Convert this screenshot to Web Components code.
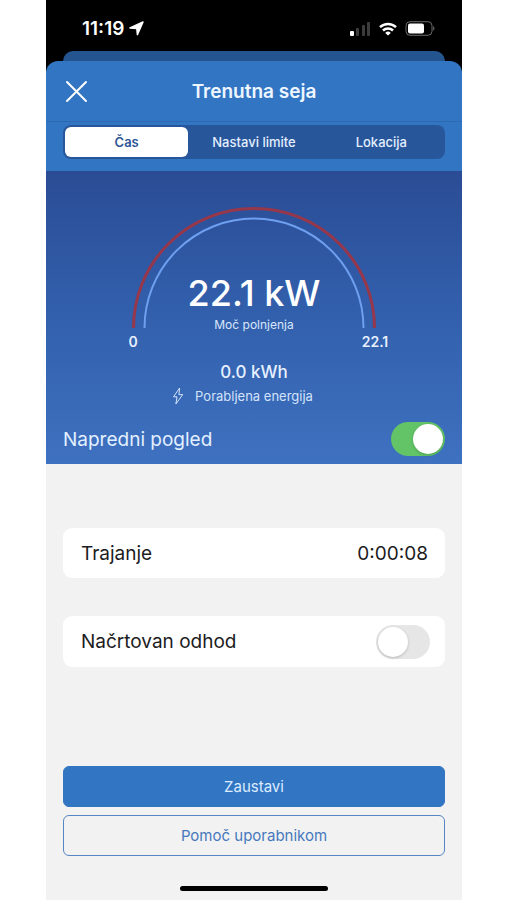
<!DOCTYPE html>
<html lang="sl">
<head>
<meta charset="utf-8">
<meta name="viewport" content="width=device-width, initial-scale=1">
<title>Trenutna seja</title>
<style>
body{
    margin: 0;
    background-color: #fff;
    font-family: Inter, "Liberation Sans", sans-serif;
}
</style>
</head>
<body>
<charge-screen>
    <status-bar slot="status" data-time="11:19"></status-bar>
    <sheet-header slot="header">Trenutna seja</sheet-header>
    <segment-tabs slot="header" data-items="Čas,Nastavi limite,Lokacija"></segment-tabs>
    <power-gauge slot="panel" data-min="0" data-max="22.1" data-value="22.1 kW" data-label="Moč polnjenja"></power-gauge>
    <energy-total slot="panel" data-value="0.0 kWh">Porabljena energija</energy-total>
    <toggle-row slot="panel" class="plain" data-label="Napredni pogled" data-on></toggle-row>
    <info-row data-label="Trajanje">0:00:08</info-row>
    <toggle-row class="card" data-label="Načrtovan odhod"></toggle-row>
    <action-button slot="actions" class="primary">Zaustavi</action-button>
    <action-button slot="actions" class="outline">Pomoč uporabnikom</action-button>
</charge-screen>

<script>
function makeTemplate(html){
    const template=document.createElement("template");
    template.innerHTML=html;
    return template;
}

const screenTemplate=makeTemplate(`
<style>
*{
    box-sizing: border-box;
}
:host{
    display: block;
    padding: 0 45px 0 46px;
}
.phone{
    display: flex;
    flex-direction: column;
    min-height: 100vh;
    background-color: #f2f2f3;
}
.top{
    background-color: #000;
}
/* edge of the page lying under the sheet */
.behind{
    height: 10px;
    margin: 0 17px;
    border-radius: 10px 10px 0 0;
    background-color: #24558f;
}
header{
    border-radius: 12px 12px 0 0;
    background-color: #3275c3;
    padding-bottom: 12px;
}
.panel{
    display: flex;
    flex-direction: column;
    padding: 36px 17px 8px;
    background: linear-gradient(#2b4c95, #3260ad 50%, #3e71c0);
}
main{
    flex: 1;
    display: flex;
    flex-direction: column;
    gap: 38px;
    padding: 64px 17px 32px;
}
footer{
    display: flex;
    flex-direction: column;
    align-items: stretch;
    gap: 8px;
    padding: 0 17px 9px;
}
.home{
    width: 148px;
    height: 5px;
    margin: 22px auto 0;
    border-radius: 3px;
    background-color: #000;
}
</style>
<div class="phone">
    <div class="top">
        <slot name="status"></slot>
        <div class="behind"></div>
        <header><slot name="header"></slot></header>
    </div>
    <section class="panel"><slot name="panel"></slot></section>
    <main><slot></slot></main>
    <footer>
        <slot name="actions"></slot>
        <div class="home"></div>
    </footer>
</div>
`);

const statusTemplate=makeTemplate(`
<style>
:host{
    display: flex;
    align-items: center;
    justify-content: space-between;
    height: 51px;
    padding: 6px 27px 0 36px;
    box-sizing: border-box;
    color: #fff;
}
.left, .right{
    display: flex;
    align-items: center;
}
.left{
    gap: 5px;
    font-size: 19px;
    font-weight: 600;
}
.right{
    gap: 8px;
}
svg{
    display: block;
}
</style>
<div class="left">
    <span class="time"></span>
    <svg width="15" height="15" viewBox="0 0 15 15" aria-hidden="true"><path d="M14 1 8.400 13.600 7.800 7.500 1 7 Z" fill="#fff" stroke="#fff" stroke-width="1.500" stroke-linejoin="round"/></svg>
</div>
<div class="right">
    <svg width="21" height="14" viewBox="0 0 21 14" aria-hidden="true">
        <rect x="0" y="9" width="4" height="5" rx="1" fill="#fff"/>
        <g fill="#3c3c3d">
            <rect x="6" y="6" width="3" height="8" rx="1"/>
            <rect x="12" y="3" width="3" height="11" rx="1"/>
            <rect x="17" y="0" width="3" height="14" rx="1"/>
        </g>
    </svg>
    <svg width="18" height="14" viewBox="0 0 18 14" aria-hidden="true">
        <g fill="none" stroke="#fff" stroke-width="2.5">
            <path d="M1 5.2a11.6 11.6 0 0 1 16 0"/>
            <path d="M4 8.5a7.4 7.4 0 0 1 10 0"/>
        </g>
        <path d="M9 13.6 6.2 10.9a4 4 0 0 1 5.6 0Z" fill="#fff"/>
    </svg>
    <svg width="30" height="15" viewBox="0 0 30 15" aria-hidden="true">
        <rect x="1" y=".7" width="26" height="13.6" rx="4" fill="none" stroke="#6b6b6b"/>
        <rect x="3" y="2.5" width="16" height="10" rx="2" fill="#fff"/>
        <path d="M28.2 5.3c1.6.6 1.6 3.8 0 4.4Z" fill="#6b6b6b"/>
    </svg>
</div>
`);

class StatusBar extends HTMLElement {
    constructor() {
        super();
        const shadow=this.attachShadow({mode: "open"});
        shadow.append(statusTemplate.content.cloneNode(true));
        shadow.querySelector(".time").textContent=this.dataset.time;
    }
}

class ChargeScreen extends HTMLElement {
    constructor() {
        super();
        const shadow=this.attachShadow({mode: "open"});
        shadow.append(screenTemplate.content.cloneNode(true));
    }
}

const headerTemplate=makeTemplate(`
<style>
:host{
    display: grid;
    grid-template-columns: 24px 1fr 24px;
    align-items: center;
    height: 61px;
    padding: 0 18px;
    box-sizing: border-box;
    border-bottom: 1px solid #2d69b2;
    color: #eef6ff;
}
button{
    padding: 0;
    border: 0;
    background: none;
}
svg{
    display: block;
}
h1{
    margin: 0;
    font-size: 19px;
    font-weight: 600;
    text-align: center;
}
</style>
<button aria-label="Zapri">
    <svg width="24" height="24" viewBox="0 0 24 24"><path d="M3 3 22 22M22 3 3 22" stroke="#fff" stroke-width="2" stroke-linecap="round"/></svg>
</button>
<h1><slot></slot></h1>
`);

class SheetHeader extends HTMLElement {
    constructor() {
        super();
        const shadow=this.attachShadow({mode: "open"});
        shadow.append(headerTemplate.content.cloneNode(true));
    }
}

const tabsTemplate=makeTemplate(`
<style>
:host{
    display: grid;
    grid-auto-flow: column;
    grid-auto-columns: 1fr;
    gap: 4px;
    margin: 3px 17px 0;
    padding: 2px;
    border-radius: 8px;
    background-color: #28569b;
}
button{
    height: 30px;
    padding: 0;
    border: 0;
    border-radius: 6px;
    background: none;
    color: #e3efff;
    font-family: inherit;
    font-size: 13px;
    font-weight: 500;
}
button[aria-pressed=true]{
    background-color: #fff;
    color: #2f5597;
    font-weight: 600;
}
</style>
`);

class SegmentTabs extends HTMLElement {
    constructor() {
        super();
        const shadow=this.attachShadow({mode: "open"});
        shadow.append(tabsTemplate.content.cloneNode(true));
        this.buttons=this.dataset.items.split(",").map((item) => {
            const button=document.createElement("button");
            button.textContent=item;
            button.addEventListener("click",() => this.select(button));
            shadow.append(button);
            return button;
        });
        this.select(this.buttons[0]);
    }

    select(active) {
        this.buttons.forEach((button) => button.setAttribute("aria-pressed",button === active));
    }
}

const gaugeTemplate=makeTemplate(`
<style>
:host{
    display: block;
    align-self: center;
    color: #fff;
}
.dial{
    display: grid;
    justify-items: center;
}
.dial > *{
    grid-area: 1 / 1;
}
svg{
    display: block;
}
.reading{
    align-self: end;
    text-align: center;
}
.value{
    font-size: 36px;
    line-height: 46px;
    font-weight: 500;
}
.label{
    font-size: 12px;
    line-height: 16px;
    margin-top: 1px;
    margin-bottom: -5px;
    color: #d9e7fb;
}
.scale{
    display: flex;
    justify-content: space-between;
    font-size: 14px;
    line-height: 18px;
    font-weight: 600;
    margin-top: 5px;
    color: #e6f0ff;
}
.scale span{
    width: 30px;
    text-align: center;
}
</style>
<div class="dial">
    <svg width="272" height="121" viewBox="0 0 272 121" fill="none" aria-hidden="true">
        <path d="M15.5 121a120.500 119.500 0 0 1 241 0" stroke="#96374b" stroke-width="3"/>
        <path d="M26.500 121a109.500 109.500 0 0 1 219 0" stroke="#6fa0f0" stroke-width="2"/>
    </svg>
    <div class="reading">
        <div class="value"></div>
        <div class="label"></div>
    </div>
</div>
<div class="scale"><span class="min"></span><span class="max"></span></div>
`);

class PowerGauge extends HTMLElement {
    constructor() {
        super();
        const shadow=this.attachShadow({mode: "open"});
        shadow.append(gaugeTemplate.content.cloneNode(true));
        for(const name of ["value","label","min","max"]){
            shadow.querySelector("."+name).textContent=this.dataset[name];
        }
    }
}

const energyTemplate=makeTemplate(`
<style>
:host{
    display: block;
    margin-top: 9px;
    text-align: center;
    color: #e6f1ff;
}
.value{
    font-size: 17px;
    line-height: 24px;
    font-weight: 500;
}
.caption{
    display: grid;
    grid-template-columns: 1fr auto 1fr;
    align-items: center;
    gap: 11px;
    font-size: 13px;
    line-height: 24px;
    color: #d3e3fa;
}
svg{
    justify-self: end;
}
</style>
<div class="value"></div>
<div class="caption">
    <svg width="12" height="18" viewBox="0 0 12 18" aria-hidden="true"><path d="M7.600 1 1.500 9.800H5L3.900 17 10.700 7.600H6.900Z" fill="none" stroke="#d3e3fa" stroke-linejoin="round"/></svg>
    <slot></slot>
</div>
`);

class EnergyTotal extends HTMLElement {
    constructor() {
        super();
        const shadow=this.attachShadow({mode: "open"});
        shadow.append(energyTemplate.content.cloneNode(true));
        shadow.querySelector(".value").textContent=this.dataset.value;
    }
}

const toggleTemplate=makeTemplate(`
<style>
:host{
    display: block;
    font-size: 19px;
}
:host(.plain){
    margin-top: 14px;
    color: #e3f0ff;
}
:host(.card){
    padding: 0 15px 0 18px;
    border-radius: 9px;
    background-color: #fff;
    color: #1c1c1e;
}
label{
    display: flex;
    align-items: center;
    justify-content: space-between;
    height: 34px;
}
:host(.card) label{
    height: 51px;
}
input{
    appearance: none;
    display: flex;
    box-sizing: border-box;
    width: 54px;
    height: 34px;
    margin: 0;
    padding: 2px;
    border-radius: 17px;
    background-color: #e6e6e7;
}
input::before{
    content: '';
    width: 30px;
    height: 30px;
    border-radius: 50%;
    background-color: #fff;
    box-shadow: 0 1px 3px #0003;
}
input:checked{
    justify-content: flex-end;
    background-color: #62c466;
}
</style>
<label><span></span><input type="checkbox" role="switch"></label>
`);

class ToggleRow extends HTMLElement {
    constructor() {
        super();
        const shadow=this.attachShadow({mode: "open"});
        shadow.append(toggleTemplate.content.cloneNode(true));
        shadow.querySelector("span").textContent=this.dataset.label;
        shadow.querySelector("input").checked="on" in this.dataset;
    }
}

const infoTemplate=makeTemplate(`
<style>
:host{
    display: flex;
    align-items: center;
    justify-content: space-between;
    height: 50px;
    padding: 0 17px 0 18px;
    border-radius: 9px;
    background-color: #fff;
    color: #1c1c1e;
    font-size: 19px;
}
</style>
<span class="label"></span>
<slot></slot>
`);

class InfoRow extends HTMLElement {
    constructor() {
        super();
        const shadow=this.attachShadow({mode: "open"});
        shadow.append(infoTemplate.content.cloneNode(true));
        shadow.querySelector(".label").textContent=this.dataset.label;
    }
}

const buttonTemplate=makeTemplate(`
<style>
:host{
    display: block;
}
button{
    display: block;
    box-sizing: border-box;
    width: 100%;
    height: 41px;
    border: 1px solid #5587c2;
    border-radius: 6px;
    background: none;
    color: #4679bc;
    font-family: inherit;
    font-size: 15px;
}
:host(.primary) button{
    border-color: #3275c3;
    background-color: #3275c3;
    color: #dcecff;
}
</style>
<button><slot></slot></button>
`);

class ActionButton extends HTMLElement {
    constructor() {
        super();
        const shadow=this.attachShadow({mode: "open"});
        shadow.append(buttonTemplate.content.cloneNode(true));
    }
}

customElements.define("charge-screen",ChargeScreen);
customElements.define("status-bar",StatusBar);
customElements.define("sheet-header",SheetHeader);
customElements.define("segment-tabs",SegmentTabs);
customElements.define("power-gauge",PowerGauge);
customElements.define("energy-total",EnergyTotal);
customElements.define("toggle-row",ToggleRow);
customElements.define("info-row",InfoRow);
customElements.define("action-button",ActionButton);
</script>
</body>
</html>
